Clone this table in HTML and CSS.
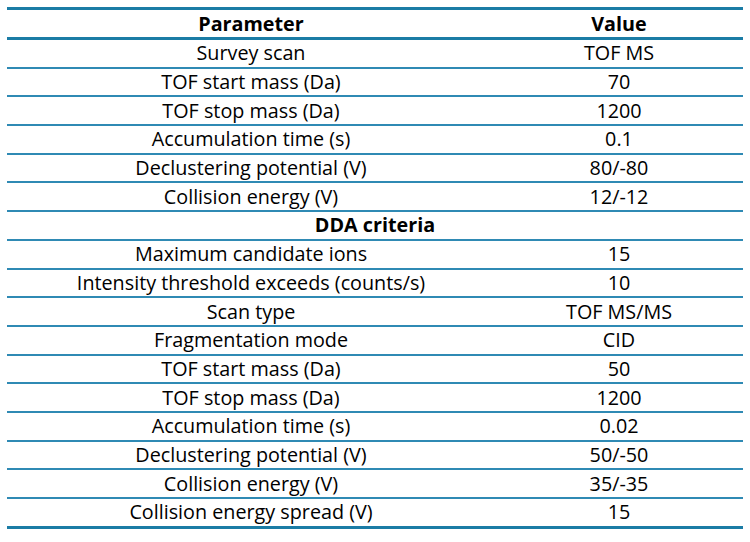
FILE: index.html
```html
<!DOCTYPE html>
<html lang="en">
<head>
<meta charset="utf-8">
<title>Parameters</title>
<link rel="stylesheet" href="styles.css">
</head>
<body>
<table class="params">
  <colgroup><col class="c1"><col class="c2"></colgroup>
  <thead>
    <tr><th>Parameter</th><th>Value</th></tr>
  </thead>
  <tbody>
    <tr><td>Survey scan</td><td>TOF MS</td></tr>
    <tr><td>TOF start mass (Da)</td><td>70</td></tr>
    <tr><td>TOF stop mass (Da)</td><td>1200</td></tr>
    <tr><td>Accumulation time (s)</td><td>0.1</td></tr>
    <tr><td>Declustering potential (V)</td><td>80/-80</td></tr>
    <tr><td>Collision energy (V)</td><td>12/-12</td></tr>
    <tr><td colspan="2" class="section">DDA criteria</td></tr>
    <tr><td>Maximum candidate ions</td><td>15</td></tr>
    <tr><td>Intensity threshold exceeds (counts/s)</td><td>10</td></tr>
    <tr><td>Scan type</td><td>TOF MS/MS</td></tr>
    <tr><td>Fragmentation mode</td><td>CID</td></tr>
    <tr><td>TOF start mass (Da)</td><td>50</td></tr>
    <tr><td>TOF stop mass (Da)</td><td>1200</td></tr>
    <tr><td>Accumulation time (s)</td><td>0.02</td></tr>
    <tr><td>Declustering potential (V)</td><td>50/-50</td></tr>
    <tr><td>Collision energy (V)</td><td>35/-35</td></tr>
    <tr class="last"><td>Collision energy spread (V)</td><td>15</td></tr>
  </tbody>
</table>
</body>
</html>
```
FILE: styles.css
```css
html, body {
  margin: 0;
  padding: 0;
  background: #ffffff;
}

body {
  padding: 7px 0 0 7px;
  font-family: "Open Sans", "Lato", sans-serif;
  font-size: 19.75px;
  color: #000000;
}

.params {
  width: 736px;
  border-collapse: separate;
  border-spacing: 0;
  table-layout: fixed;
}

.c1 { width: 488px; }
.c2 { width: 248px; }

.params th {
  font-weight: 700;
  text-align: center;
  height: 27px;
  padding: 0;
  line-height: 27px;
  border-top: 3px solid #1b7ca5;
  border-bottom: 3px solid #1b7ca5;
}

.params td {
  text-align: center;
  padding: 0;
  height: 26.7px;
  line-height: 26px;
  border-bottom: 2px solid #2f8ab4;
}

.params td.section {
  font-weight: 700;
}

.params tr.last td {
  border-bottom: 3px solid #1b7ca5;
}
```
